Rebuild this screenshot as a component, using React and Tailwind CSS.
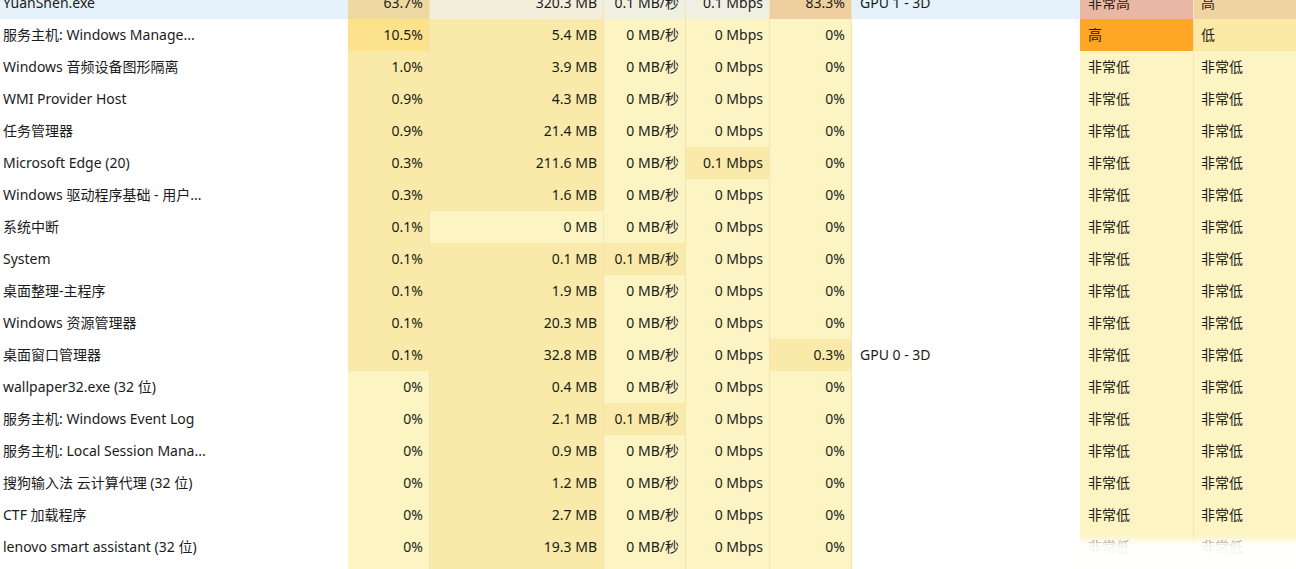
const cols = "grid-cols-[348px_82px_174px_82px_84px_82px_228px_114px_102px]";

// heat shades used by the task manager cells
const L0 = "bg-[#fdf4c4]";
const L1 = "bg-[#f9eaa9]";
const L2 = "bg-[#fbe28b]";

const rows = [
    {
        name: "YuanShen.exe",
        selected: true,
        cpu: ["63.7%", "bg-[#eed9a3]"],
        mem: ["320.3 MB", "bg-[#f3eedc]"],
        disk: ["0.1 MB/秒", "bg-[#eff0e2]"],
        net: ["0.1 Mbps", "bg-[#eff0e3]"],
        gpu: ["83.3%", "bg-[#efcf9f]"],
        engine: "GPU 1 - 3D",
        power: ["非常高", "bg-[#eab7a5]"],
        trend: ["高", "bg-[#efd4a2]"],
    },
    { name: "服务主机: Windows Manage...", cpu: ["10.5%", L2], mem: ["5.4 MB", L1], power: ["高", "bg-[#ffa624]"], trend: ["低", "bg-[#fbeaa6]"] },
    { name: "Windows 音频设备图形隔离", cpu: ["1.0%", L1], mem: ["3.9 MB", L1] },
    { name: "WMI Provider Host", cpu: ["0.9%", L1], mem: ["4.3 MB", L1] },
    { name: "任务管理器", cpu: ["0.9%", L1], mem: ["21.4 MB", L1] },
    { name: "Microsoft Edge (20)", cpu: ["0.3%", L1], mem: ["211.6 MB", L1], net: ["0.1 Mbps", L1] },
    { name: "Windows 驱动程序基础 - 用户...", cpu: ["0.3%", L1], mem: ["1.6 MB", L1] },
    { name: "系统中断", cpu: ["0.1%", L1], mem: ["0 MB", L0] },
    { name: "System", cpu: ["0.1%", L1], mem: ["0.1 MB", L1], disk: ["0.1 MB/秒", L1] },
    { name: "桌面整理-主程序", cpu: ["0.1%", L1], mem: ["1.9 MB", L1] },
    { name: "Windows 资源管理器", cpu: ["0.1%", L1], mem: ["20.3 MB", L1] },
    { name: "桌面窗口管理器", cpu: ["0.1%", L1], mem: ["32.8 MB", L1], gpu: ["0.3%", L1], engine: "GPU 0 - 3D" },
    { name: "wallpaper32.exe (32 位)", cpu: ["0%", L0], mem: ["0.4 MB", L1] },
    { name: "服务主机: Windows Event Log", cpu: ["0%", L0], mem: ["2.1 MB", L1], disk: ["0.1 MB/秒", L1] },
    { name: "服务主机: Local Session Mana...", cpu: ["0%", L0], mem: ["0.9 MB", L1] },
    { name: "搜狗输入法 云计算代理 (32 位)", cpu: ["0%", L0], mem: ["1.2 MB", L1] },
    { name: "CTF 加载程序", cpu: ["0%", L0], mem: ["2.7 MB", L1] },
    { name: "lenovo smart assistant (32 位)", cpu: ["0%", L0], mem: ["19.3 MB", L1] },
    { name: "", cpu: ["", L0], mem: ["", L1], disk: ["", L0], net: ["", L0], gpu: ["", L0], power: ["", L0], trend: ["", L0] },
];

function Cell({ value, right, className }) {
    return (
        <div
            className={`h-8 pb-[2px] flex items-center border-r border-[#f1e4b6] ${right ? "justify-end pr-[6px]" : "pl-2"} ${className}`}
        >
            {value}
        </div>
    );
}

function Row({ r }) {
    const disk = r.disk || ["0 MB/秒", L0];
    const net = r.net || ["0 Mbps", L0];
    const gpu = r.gpu || ["0%", L0];
    const power = r.power || ["非常低", L0];
    const trend = r.trend || ["非常低", L0];
    const plain = r.selected ? "bg-[#e5f1fb]" : "bg-white";
    return (
        <div className={`grid ${cols} h-8`}>
            <div className={`h-8 pb-[2px] flex items-center pl-[3px] ${plain}`}>{r.name}</div>
            <Cell value={r.cpu[0]} right className={r.cpu[1]} />
            <Cell value={r.mem[0]} right className={r.mem[1]} />
            <Cell value={disk[0]} right className={disk[1]} />
            <Cell value={net[0]} right className={net[1]} />
            <Cell value={gpu[0]} right className={gpu[1]} />
            <div className={`h-8 pb-[2px] flex items-center pl-2 ${plain}`}>{r.engine}</div>
            <Cell value={power[0]} className={power[1]} />
            <Cell value={trend[0]} className={`${trend[1]} pl-[7px] border-r-0`} />
        </div>
    );
}

export default function App() {
    return (
        <div
            className="relative w-[1296px] h-[569px] overflow-hidden bg-white text-[14px] text-[#1b1b1b] whitespace-nowrap"
            style={{ fontFamily: '"Noto Sans", "Noto Sans CJK SC", sans-serif' }}
        >
            <div className="-mt-[13px]">
                {rows.map((r, i) => (
                    <Row key={i} r={r} />
                ))}
            </div>

            {/* blurred watermark patch at the bottom right */}
            <div className="absolute left-[962px] top-[540px] w-[340px] h-[40px] bg-white/95 blur-[3px]" />
        </div>
    );
}
